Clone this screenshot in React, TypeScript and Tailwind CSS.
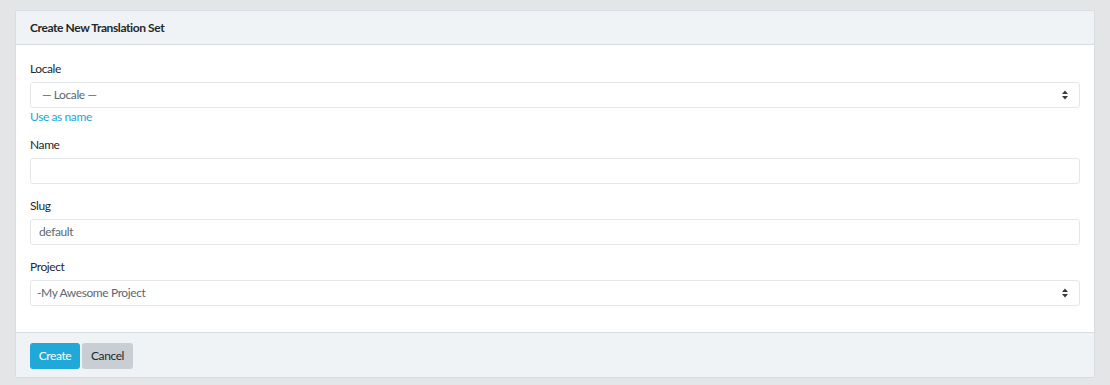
import React from "react";

function Chevron() {
  return (
    <svg width="8" height="12" viewBox="0 0 8 12" className="absolute right-[10px] top-1/2 -translate-y-1/2">
      <path d="M4 1.5 L7 5 H1 Z" fill="#343a40" />
      <path d="M4 10.5 L7 7 H1 Z" fill="#343a40" />
    </svg>
  );
}

function Field({ label, children }: { label: string; children: React.ReactNode }) {
  return (
    <div className="flex flex-col">
      <label className="text-[12px] tracking-[-0.4px] leading-[18px] text-[#23282c] mb-[4px]">{label}</label>
      {children}
    </div>
  );
}

function SelectBox({ value, indent }: { value: string; indent?: boolean }) {
  return (
    <div className="relative h-[26px] rounded-[3px] border border-[#e4e7ea] bg-white flex items-center pl-[6px] text-[12px] tracking-[-0.4px] text-[#5c6873]">
      <span className={indent ? "ml-[5px]" : ""}>{value}</span>
      <Chevron />
    </div>
  );
}

function InputBox({ value }: { value?: string }) {
  return (
    <div className="h-[26px] rounded-[3px] border border-[#e4e7ea] bg-white flex items-center pl-[8px] text-[12px] tracking-[-0.4px] text-[#5c6873]">
      {value}
    </div>
  );
}

export default function App() {
  return (
    <div
      className="w-[1110px] h-[385px] bg-[#e4e5e6] pt-[10px] pl-[15px] pr-[15px]"
      style={{ fontFamily: 'Lato, "Noto Sans", sans-serif' }}
    >
      <div className="w-[1080px] h-[368px] rounded-[3px] border border-[#d8dbe0] bg-white flex flex-col overflow-hidden">
        <div className="h-[34px] bg-[#f0f3f5] border-b border-[#d8dbe0] flex items-center px-[14px] text-[12px] tracking-[-0.4px] font-bold text-[#23282c]">
          Create New Translation Set
        </div>
        <div className="flex-1 px-[14px] pt-[15px] flex flex-col">
          <Field label="Locale">
            <SelectBox value="— Locale —" indent />
            <a className="text-[12px] tracking-[-0.4px] leading-[18px] text-[#20a8d8]">Use as name</a>
          </Field>
          <div className="mt-[10px]">
            <Field label="Name">
              <InputBox />
            </Field>
          </div>
          <div className="mt-[13px]">
            <Field label="Slug">
              <InputBox value="default" />
            </Field>
          </div>
          <div className="mt-[13px]">
            <Field label="Project">
              <SelectBox value="-My Awesome Project" />
            </Field>
          </div>
        </div>
        <div className="h-[45px] bg-[#f0f3f5] border-t border-[#d8dbe0] flex items-start pt-[10px] px-[14px] gap-[2px]">
          <button className="h-[26px] w-[50px] rounded-[3px] bg-[#20a8d8] text-white text-[12px] tracking-[-0.4px]">Create</button>
          <button className="h-[26px] w-[51px] rounded-[3px] bg-[#c8ced3] text-[#23282c] text-[12px] tracking-[-0.4px]">Cancel</button>
        </div>
      </div>
    </div>
  );
}
